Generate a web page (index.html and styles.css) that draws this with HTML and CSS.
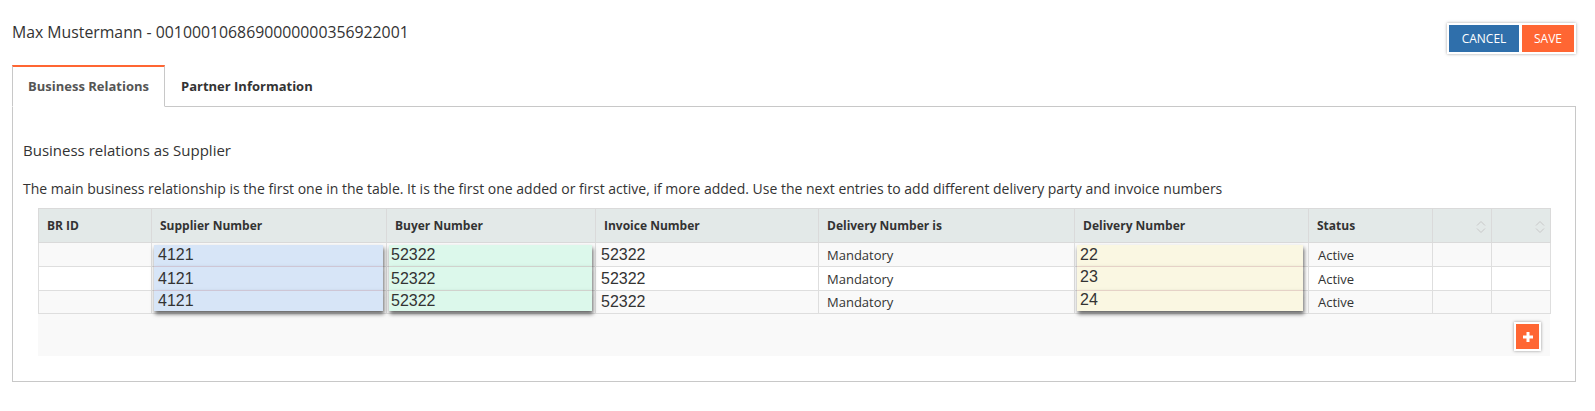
FILE: index.html
```html
<!DOCTYPE html>
<html lang="en">
<head>
<meta charset="utf-8">
<title>Business Relations</title>
<link rel="stylesheet" href="styles.css">
</head>
<body>
<div class="page">
  <header class="topbar">
    <h1 class="title">Max Mustermann - 0010001068690000000356922001</h1>
    <div class="actions">
      <button class="btn btn-cancel">CANCEL</button>
      <button class="btn btn-save">SAVE</button>
    </div>
  </header>
  <nav class="tabs">
    <div class="tab active">Business Relations</div>
    <div class="tab">Partner Information</div>
  </nav>
  <section class="panel">
    <h2 class="section-title">Business relations as Supplier</h2>
    <p class="desc">The main business relationship is the first one in the table. It is the first one added or first active, if more added. Use the next entries to add different delivery party and invoice numbers</p>
    <div class="grid-wrap">
      <table class="grid">
        <colgroup>
          <col class="c-brid">
          <col class="c-sup">
          <col class="c-buy">
          <col class="c-inv">
          <col class="c-dis">
          <col class="c-del">
          <col class="c-st">
          <col class="c-x">
          <col class="c-x">
        </colgroup>
        <thead>
          <tr class="hd">
            <th>BR ID</th>
            <th>Supplier Number</th>
            <th>Buyer Number</th>
            <th>Invoice Number</th>
            <th>Delivery Number is</th>
            <th>Delivery Number</th>
            <th>Status</th>
            <th class="sort"><svg class="sort-ico" width="10" height="14" viewBox="0 0 10 14"><polyline points="1,5.5 5,1.5 9,5.5"/><polyline points="1,8.5 5,12.5 9,8.5"/></svg></th>
            <th class="sort"><svg class="sort-ico" width="10" height="14" viewBox="0 0 10 14"><polyline points="1,5.5 5,1.5 9,5.5"/><polyline points="1,8.5 5,12.5 9,8.5"/></svg></th>
          </tr>
        </thead>
        <tbody>
          <tr class="r1">
            <td></td>
            <td class="in"><div class="inp blue">4121</div></td>
            <td class="in"><div class="inp green">52322</div></td>
            <td class="num">52322</td>
            <td class="txt">Mandatory</td>
            <td class="in"><div class="inp yellow">22</div></td>
            <td class="txt st">Active</td>
            <td></td>
            <td></td>
          </tr>
          <tr class="r2">
            <td></td>
            <td class="in"><div class="inp blue">4121</div></td>
            <td class="in"><div class="inp green">52322</div></td>
            <td class="num">52322</td>
            <td class="txt">Mandatory</td>
            <td class="in"><div class="inp yellow">23</div></td>
            <td class="txt st">Active</td>
            <td></td>
            <td></td>
          </tr>
          <tr class="r3">
            <td></td>
            <td class="in"><div class="inp blue">4121</div></td>
            <td class="in"><div class="inp green">52322</div></td>
            <td class="num">52322</td>
            <td class="txt">Mandatory</td>
            <td class="in"><div class="inp yellow">24</div></td>
            <td class="txt st">Active</td>
            <td></td>
            <td></td>
          </tr>
        </tbody>
      </table>
      <div class="grid-footer">
        <button class="add-btn" aria-label="Add"><svg width="10" height="10" viewBox="0 0 10 10"><rect x="3.5" y="0" width="3" height="10" fill="#fff"/><rect x="0" y="3.5" width="10" height="3" fill="#fff"/></svg></button>
      </div>
    </div>
  </section>
</div>
</body>
</html>
```

FILE: styles.css
```css
* { box-sizing: border-box; }

body {
  margin: 0;
  background: #fff;
  font-family: "Open Sans", "Liberation Sans", sans-serif;
  color: #333;
}

.page {
  padding: 0 19px 0 12px;
}

/* top bar */
.topbar {
  display: flex;
  justify-content: space-between;
  align-items: flex-start;
  padding-top: 23px;
  height: 55px;
  margin-bottom: 10px;
}

.title {
  margin: -1.5px 0 0 0;
  font-size: 15.8px;
  font-weight: 400;
  line-height: 20px;
  color: #333;
}

.actions {
  display: flex;
  gap: 3px;
  padding: 2px;
  background: #fff;
  box-shadow: 0 0 3px rgba(0, 0, 0, 0.35);
}

.btn {
  border: 0;
  height: 27px;
  padding: 0;
  color: #fff;
  font-family: "Open Sans", sans-serif;
  font-size: 12px;
  cursor: pointer;
}

.btn-cancel { width: 70px; background: #2f6fab; }
.btn-save { width: 52px; background: #ff6633; }

/* tabs */
.tabs {
  display: flex;
  margin-bottom: -1px;
}

.tab {
  padding: 10px 15px 11px;
  line-height: 18px;
  font-size: 13px;
  font-weight: 700;
  color: #333;
  border: 1px solid transparent;
  border-top: 2px solid transparent;
}

.tab.active {
  position: relative;
  background: #fff;
  color: #555;
  border-color: #c8c8c8;
  border-top-color: #ff6633;
  border-bottom-color: #fff;
}

/* panel */
.panel {
  border: 1px solid #c8c8c8;
  padding: 33px 10px 25px;
}

.section-title {
  margin: 0;
  font-size: 15px;
  font-weight: 400;
  line-height: 20px;
  color: #333;
}

.desc {
  margin: 19px 0 0;
  font-size: 14px;
  line-height: 20px;
  color: #333;
}

.grid-wrap {
  margin: 9px 15px 0;
}

/* table */
.grid {
  width: 100%;
  table-layout: fixed;
  border-collapse: collapse;
}

.c-brid { width: 113px; }
.c-sup { width: 235px; }
.c-buy { width: 209px; }
.c-inv { width: 223px; }
.c-dis { width: 256px; }
.c-del { width: 234px; }
.c-st { width: 124px; }
.c-x { width: 59px; }

.hd { height: 34px; }
.r1 { height: 24px; }
.r2 { height: 24px; }
.r3 { height: 23px; }

.grid th {
  background: #e3e9e8;
  border: 1px solid #dadada;
  padding: 0 8px;
  text-align: left;
  vertical-align: middle;
  font-size: 12px;
  font-weight: 700;
  color: #333;
}

.grid th.sort {
  text-align: right;
  padding-right: 5px;
}

.sort-ico {
  display: inline-block;
  vertical-align: middle;
  fill: none;
  stroke: #c8c8c8;
  stroke-width: 1;
}

.grid td {
  border: 1px solid #dedede;
  padding: 0 8px;
  vertical-align: middle;
  font-size: 13px;
  color: #333;
}

.grid tbody tr:nth-child(odd) { background: #f9f9f9; }
.grid tbody tr:nth-child(even) { background: #fff; }

.grid td.st { padding-left: 9px; }

.grid td.num {
  padding-left: 5px;
  font-family: "Liberation Sans", Arial, sans-serif;
  font-size: 16px;
}

.grid td.in {
  padding: 0;
  vertical-align: top;
}

/* inline inputs */
.inp {
  position: relative;
  font-family: "Liberation Sans", Arial, sans-serif;
  font-size: 16px;
  color: #333;
  white-space: nowrap;
  box-shadow: 1px 3px 4px rgba(0, 0, 0, 0.6);
}

.inp.blue { background: #d7e5f7; margin: 0 3px 0 2px; padding-left: 4px; }
.inp.green { background: #dcf8eb; margin: 0 3px 0 2px; padding-left: 2px; }
.inp.yellow { background: #faf7e2; margin: 0 5px 0 2px; padding-left: 3px; }

.r1 .inp {
  margin-top: 2px;
  height: 21px;
  line-height: 20px;
}

.r2 .inp {
  margin-top: -1px;
  height: 24px;
  line-height: 23px;
  border-top: 1px solid rgba(190, 140, 150, 0.35);
}

.r3 .inp {
  margin-top: -1px;
  height: 21px;
  line-height: 20px;
  border-top: 1px solid rgba(190, 140, 150, 0.35);
}

.r2 .inp.yellow { line-height: 19px; }
.r3 .inp.yellow { line-height: 18px; }

/* footer */
.grid-footer {
  height: 42px;
  background: #f9f9f9;
  display: flex;
  justify-content: flex-end;
  align-items: flex-start;
  padding: 8px 9px 0;
}

.add-btn {
  width: 27px;
  height: 29px;
  padding: 0;
  border: 2px solid #fff;
  background: #ff6633;
  box-shadow: 0 0 3px rgba(0, 0, 0, 0.4);
  display: flex;
  align-items: center;
  justify-content: center;
  cursor: pointer;
}

.add-btn svg { display: block; }
```
